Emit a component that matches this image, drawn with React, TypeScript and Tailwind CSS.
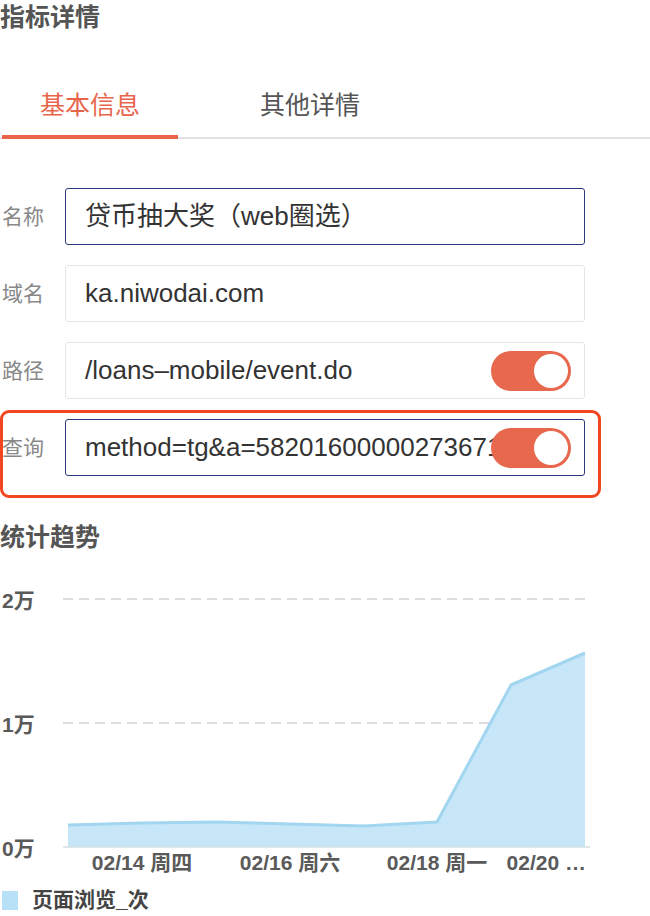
import React from "react";

const points: [number, number][] = [
    [68, 271],
    [142, 269],
    [216, 268],
    [290, 270],
    [364, 272],
    [437, 268],
    [511, 131],
    [585, 99],
];

function Toggle() {
    return (
        <div className="absolute right-[13px] top-1/2 -translate-y-1/2 w-[80px] h-[40px] rounded-full bg-[#e8684d] flex items-center justify-end pr-[3px]">
            <div className="w-[34px] h-[34px] rounded-full bg-white" />
        </div>
    );
}

function Field({
    label,
    value,
    focused,
    toggle,
}: {
    label: string;
    value: string;
    focused?: boolean;
    toggle?: boolean;
}) {
    return (
        <div className="flex items-center">
            <div className="w-[65px] pl-[2px] text-[21px] text-[#888]">{label}</div>
            <div
                className={
                    focused
                        ? "relative w-[520px] h-[57px] rounded-[3px] border-[1.5px] border-[#2b3a78] flex items-center px-[19px] overflow-hidden"
                        : "relative w-[520px] h-[57px] rounded-[3px] border border-[#e6e6e6] flex items-center px-[19px] overflow-hidden"
                }
            >
                <span className="text-[26px] text-[#333] whitespace-nowrap">{value}</span>
                {toggle && <Toggle />}
            </div>
        </div>
    );
}

function Chart() {
    const line = points.map(([x, y]) => `${x},${y}`).join(" ");
    const area = `68,293 ${line} 585,293`;
    return (
        <svg width="650" height="331" className="block">
            <line x1="63" y1="45" x2="588" y2="45" stroke="#d4d4d4" strokeWidth="1.5" strokeDasharray="10 6" />
            <line x1="63" y1="169" x2="588" y2="169" stroke="#d4d4d4" strokeWidth="1.5" strokeDasharray="10 6" />
            <polygon points={area} fill="#c7e7f8" />
            <polyline points={line} fill="none" stroke="#a2d6f0" strokeWidth="3" strokeLinejoin="round" />
            <line x1="63" y1="293" x2="590" y2="293" stroke="#d6dfe5" strokeWidth="1.5" />
            <g fill="#5a5a5a" fontSize="21" fontWeight="700">
                <text x="2" y="54">2万</text>
                <text x="2" y="178">1万</text>
                <text x="2" y="302">0万</text>
                <text x="142" y="316" textAnchor="middle">02/14 周四</text>
                <text x="290" y="316" textAnchor="middle">02/16 周六</text>
                <text x="437" y="316" textAnchor="middle">02/18 周一</text>
                <text x="586" y="316" textAnchor="end">02/20 …</text>
            </g>
        </svg>
    );
}

export default function App() {
    return (
        <div className="w-[650px] h-[916px] bg-white overflow-hidden font-['Liberation_Sans','Noto_Sans_CJK_SC',sans-serif]">
            <div className="text-[25px] leading-[34px] font-bold text-[#555]">指标详情</div>

            <div className="mt-[53px] flex border-b-2 border-[#e3e3e3]">
                <div className="ml-[2px] w-[176px] text-center text-[25px] leading-[36px] text-[#e8654c] pb-[12px] border-b-4 border-[#e8654c] -mb-[2px]">
                    基本信息
                </div>
                <div className="pl-[82px] text-[25px] leading-[36px] text-[#555]">其他详情</div>
            </div>

            <div className="mt-[49px] flex flex-col gap-[20px]">
                <Field label="名称" value="贷币抽大奖（web圈选）" focused />
                <Field label="域名" value="ka.niwodai.com" />
                <Field label="路径" value="/loans–mobile/event.do" toggle />
                <div className="relative">
                    <Field label="查询" value="method=tg&a=58201600000273671" focused toggle />
                    <div className="absolute pointer-events-none left-0 -top-[9px] w-[601px] h-[88px] rounded-[9px] border-[3px] border-[#f1461f]" />
                </div>
            </div>

            <div className="mt-[44px] text-[25px] leading-[34px] font-bold text-[#555]">统计趋势</div>

            <Chart />

            <div className="mt-[4px] flex items-center gap-[14px]">
                <div className="ml-[2px] w-[16px] h-[19px] bg-[#b8e0f6]" />
                <div className="text-[21px] leading-[22px] font-bold text-[#444]">页面浏览_次</div>
            </div>
        </div>
    );
}
